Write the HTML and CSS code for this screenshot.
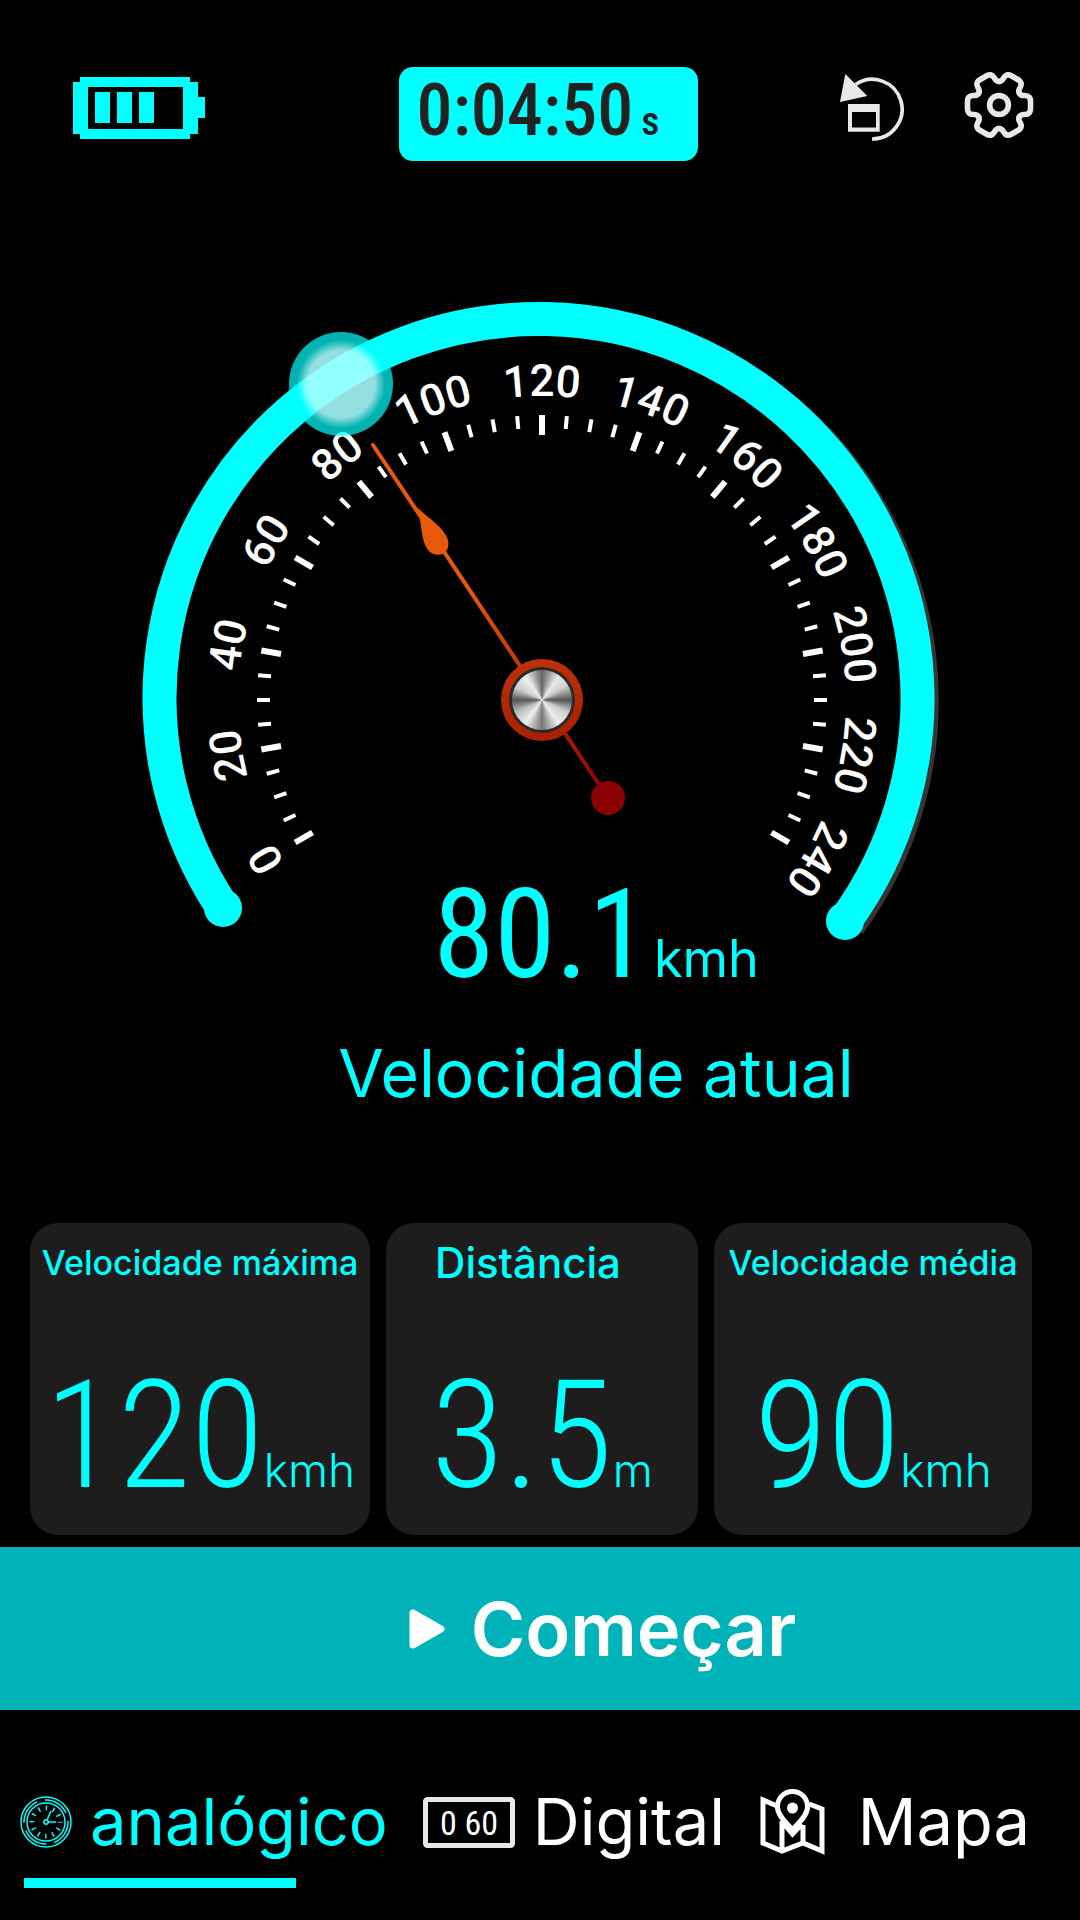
FILE: index.html
```html
<!DOCTYPE html>
<html lang="pt">

<head>
    <meta charset="UTF-8">
    <meta name="viewport" content="width=device-width, initial-scale=1.0">
    <title>Velocímetro</title>
    <link rel="stylesheet" href="styles.css">
</head>

<body>
    <header class="topbar">
        <svg class="battery" width="132" height="62" viewBox="0 0 132 62" role="img" aria-label="Bateria">
            <path fill-rule="evenodd" d="M7 0H117V5H125V20H132V41H125V57H117V62H7V57H0V5H7ZM15 10V52H110V10Z" />
            <path d="M22 15H37V46H22ZM44 15H59V46H44ZM66 15H81V46H66Z" />
        </svg>
        <div class="timer">
            <span class="timer-value">0:04:50</span>
            <span class="timer-unit">s</span>
        </div>
        <div class="actions">
            <button class="icon-btn" aria-label="Reiniciar">
                <svg width="64" height="71" viewBox="0 -3 64 71">
                    <path class="line" d="M15.6 10.5A29.8 29.8 0 1 1 32 65" stroke-width="3.7" />
                    <path class="solid" d="M5.3 0L27.3 22L0 28Z" />
                    <path class="solid" fill-rule="evenodd" d="M8 30H39.7V57.7H8ZM12 38V53.5H36V38Z" />
                </svg>
            </button>
            <button class="icon-btn" aria-label="Configurações">
                <svg width="70" height="68" viewBox="-35 -34 70 68">
                    <defs>
                        <path id="tooth" d="M20.35 -11.75C22 -9 24 -9.5 26 -9.5C30 -9.5 31.5 -7 31.5 -4V4C31.5 7 30 9.5 26 9.5C24 9.5 22 9 20.35 11.75" />
                    </defs>
                    <g class="line" stroke-width="5.6" stroke-linecap="round">
                        <use href="#tooth" />
                        <use href="#tooth" transform="rotate(60)" />
                        <use href="#tooth" transform="rotate(120)" />
                        <use href="#tooth" transform="rotate(180)" />
                        <use href="#tooth" transform="rotate(240)" />
                        <use href="#tooth" transform="rotate(300)" />
                        <circle r="9.4" />
                    </g>
                </svg>
            </button>
        </div>
    </header>

    <main>
        <svg class="gauge" viewBox="0 0 1080 710" role="img" aria-label="80.1 kmh">
            <defs>
                <radialGradient id="glow">
                    <stop offset="0.65" stop-color="#fff" stop-opacity="0.58" />
                    <stop offset="0.85" stop-color="#fff" stop-opacity="0" />
                </radialGradient>
                <linearGradient id="needle" gradientUnits="userSpaceOnUse" x1="373" y1="284" x2="608" y2="637">
                    <stop offset="0.4" stop-color="#e8590c" />
                    <stop offset="1" stop-color="#8b0000" />
                </linearGradient>
                <linearGradient id="ring" x1="0" y1="0" x2="0" y2="1">
                    <stop offset="0" stop-color="#bd3205" />
                    <stop offset="1" stop-color="#a81f04" />
                </linearGradient>
                <path id="scale-path" d="M542 843A304 304 0 0 1 542 235A304 304 0 0 1 542 843" />
            </defs>

            <path class="track-shadow" d="M786 249A379 379 0 0 1 849 763" />
            <path class="track" d="M223 747A379 379 0 1 1 845 760" />
            <circle class="track-end" cx="223" cy="747" r="19" />
            <circle class="track-end" cx="845" cy="760" r="19" />

            <g id="ticks"></g>
            <g id="labels"></g>

            <circle class="marker" cx="341" cy="223" r="52" />
            <circle cx="341" cy="223" r="52" fill="url(#glow)" />

            <path d="M373 284L608 637" stroke="url(#needle)" stroke-width="4" stroke-linecap="round" />
            <path fill="#e8590c" d="M418 347C428 357 444 366 448 379C451 393 438 397 430 391C421 383 422 365 418 347Z" />
            <circle cx="608" cy="637" r="17" fill="#8b0000" />
            <circle cx="542" cy="539" r="41" fill="url(#ring)" />
            <circle cx="542" cy="539" r="33" fill="#2a2a2a" />
            <foreignObject x="512" y="509" width="60" height="60">
                <div class="knob"></div>
            </foreignObject>
        </svg>

        <section class="readout">
            <p class="speed"><span class="speed-value">80.1</span> <span class="speed-unit">kmh</span></p>
            <h1>Velocidade atual</h1>
        </section>

        <section class="cards">
            <article class="card">
                <h2>Velocidade máxima</h2>
                <p><span class="value">120</span><span class="unit">kmh</span></p>
            </article>
            <article class="card card-distance">
                <h2>Distância</h2>
                <p><span class="value">3.5</span><span class="unit">m</span></p>
            </article>
            <article class="card">
                <h2>Velocidade média</h2>
                <p><span class="value">90</span><span class="unit">kmh</span></p>
            </article>
        </section>

        <button class="start-btn">
            <svg width="36" height="40" viewBox="0 0 36 40">
                <path d="M4 4V36L32 20Z" fill="#fff" stroke="#fff" stroke-width="7" stroke-linejoin="round" />
            </svg>
            Começar
        </button>
    </main>

    <nav class="tabs">
        <a class="tab active" href="#analogico">
            <svg width="52" height="52" viewBox="-26 -26 52 52" fill="none" stroke="#0ff">
                <circle r="25" stroke-width="1.5" />
                <circle r="22" stroke-width="1.5" stroke-dasharray="26 8" />
                <circle r="19" stroke-width="1.5" />
                <circle r="14" stroke-width="5" stroke-dasharray="1.5 5.83" stroke-dashoffset="0.75" />
                <circle r="2.2" stroke-width="1.5" />
                <path d="M2 0H10M1 -2L5 -11" stroke-width="1.6" />
            </svg>
            <span>analógico</span>
        </a>
        <a class="tab" href="#digital">
            <svg width="92" height="51" viewBox="0 0 92 51">
                <rect x="2.5" y="2.5" width="87" height="46" rx="2" fill="none" stroke="#e8e8e8" stroke-width="5" />
                <text class="tab-digits" x="46" y="38" text-anchor="middle">0 60</text>
            </svg>
            <span>Digital</span>
        </a>
        <a class="tab tab-map" href="#mapa">
            <svg width="66" height="66" viewBox="0 0 66 66" fill="none" stroke="#fff" stroke-width="5">
                <path d="M17 17L3 11V54L22 62L43 54L62 62V20L49 15" />
                <path d="M22 32V62M43 36V54M24 35L32.5 45L42 35" />
                <path d="M32.5 41C27 34 17.5 27 17.5 18C17.5 9 24 2.5 32.5 2.5S47.5 9 47.5 18C47.5 27 38 34 32.5 41Z" />
                <circle cx="32.5" cy="19" r="5.5" fill="#fff" stroke="none" />
            </svg>
            <span>Mapa</span>
        </a>
    </nav>

<script src="script.js"></script>
</body>

</html>
```
FILE: styles.css
```css
* {
    margin: 0;
    padding: 0;
    box-sizing: border-box;
}

body {
    min-height: 100vh;
    background-color: #000;
    color: #0ff;
    font-family: Inter, "Noto Sans", sans-serif;
}

button {
    border: none;
    background: none;
    font-family: inherit;
    cursor: pointer;
}

svg {
    display: block;
    flex-shrink: 0;
}

/* top bar */
.topbar {
    display: grid;
    grid-template-columns: 1fr auto 1fr;
    align-items: start;
    padding: 67px 46px 0 62px;
}

.battery {
    margin: 10px 0 0 11px;
    fill: #0ff;
}

.timer {
    display: flex;
    align-items: baseline;
    gap: 8px;
    width: 299px;
    height: 94px;
    padding-left: 18px;
    border-radius: 14px;
    background-color: #0ff;
    color: #222;
    font-family: "Roboto Condensed", "Liberation Sans Narrow", sans-serif;
    font-weight: 500;
    line-height: 88px;
}

.timer-value {
    font-size: 72px;
}

.timer-unit {
    font-size: 40px;
}

.actions {
    display: flex;
    align-items: flex-start;
    justify-content: flex-end;
    gap: 60px;
    padding-top: 4px;
}

.line {
    fill: none;
    stroke: #e8e8e8;
}

.solid {
    fill: #e8e8e8;
}

/* gauge */
.gauge {
    width: 100%;
    overflow: visible;
}

.track,
.track-shadow {
    fill: none;
    stroke: #0ff;
    stroke-width: 34;
}

.track-shadow {
    stroke: #383434;
}

.track-end {
    fill: #0ff;
}

.marker {
    fill: #0ff;
    fill-opacity: 0.7;
}

.tick {
    stroke: #fff;
    stroke-width: 4;
}

.tick.major {
    stroke-width: 6;
}

.label {
    fill: #fff;
    font-family: Roboto, sans-serif;
    font-size: 44px;
    font-weight: 500;
    text-anchor: middle;
}

.knob {
    width: 60px;
    height: 60px;
    border-radius: 50%;
    background: conic-gradient(#666, #e8e8e8 35deg, #ccc 60deg, #555 90deg, #ccc 115deg, #eee 145deg, #777 180deg, #eee 215deg, #bbb 245deg, #555 270deg, #ccc 295deg, #eee 325deg, #666);
}

/* current speed */
.readout {
    padding-left: 112px;
    text-align: center;
}

.speed {
    line-height: 128px;
}

.speed-value {
    font-family: "Roboto Condensed", "Liberation Sans Narrow", sans-serif;
    font-size: 124px;
}

.speed-unit {
    font-size: 52px;
}

.readout h1 {
    font-size: 66px;
    font-weight: 400;
    line-height: 76px;
}

/* cards */
.cards {
    display: grid;
    grid-template-columns: 340fr 312fr 318fr;
    gap: 16px;
    margin-top: 112px;
    padding: 0 48px 0 30px;
}

.card {
    display: flex;
    flex-direction: column;
    justify-content: space-between;
    height: 312px;
    padding: 20px 0 24px;
    border-radius: 28px;
    background-color: #1e1c1d;
    text-align: center;
    white-space: nowrap;
}

.card h2 {
    font-size: 34px;
    font-weight: 500;
    line-height: 40px;
}

.card-distance h2 {
    padding-right: 28px;
    font-size: 42px;
}

.value {
    font-family: "Roboto Condensed", "Liberation Sans Narrow", sans-serif;
    font-size: 150px;
    font-weight: 350;
    line-height: 150px;
}

.unit {
    font-size: 46px;
    font-weight: 300;
}

/* start */
.start-btn {
    display: flex;
    align-items: center;
    justify-content: center;
    gap: 26px;
    width: 100%;
    height: 163px;
    margin-top: 12px;
    padding-left: 125px;
    background-color: #00b3b8;
    color: #fff;
    font-size: 74px;
    font-weight: 600;
}

/* tabs */
.tabs {
    display: flex;
    justify-content: space-between;
    padding: 62px 50px 0 20px;
}

.tab {
    display: flex;
    align-items: center;
    gap: 18px;
    color: #fff;
    font-size: 65px;
    line-height: 100px;
    text-decoration: none;
}

.tab-map {
    gap: 32px;
}

.tab.active {
    position: relative;
    color: #0ff;
}

.tab.active::after {
    content: "";
    position: absolute;
    left: 4px;
    bottom: -16px;
    width: 272px;
    height: 10px;
    background-color: #0ff;
}

.tab-digits {
    fill: #fff;
    font-family: "Roboto Condensed", "Liberation Sans Narrow", sans-serif;
    font-size: 34px;
}
```
FILE: script.js
```js
const SVG = "http://www.w3.org/2000/svg";
const ticks = document.querySelector("#ticks");
const labels = document.querySelector("#labels");

// scale goes from -120deg (0) to 120deg (240), one tick every 5deg
for (let angle = -120; angle <= 120; angle += 5) {
    const major = angle % 20 === 0;
    const tick = document.createElementNS(SVG, "line");
    tick.setAttribute("class", major ? "tick major" : "tick");
    tick.setAttribute("x1", 542);
    tick.setAttribute("x2", 542);
    tick.setAttribute("y1", 254);
    tick.setAttribute("y2", major ? 274 : 267);
    tick.setAttribute("transform", `rotate(${angle} 542 539)`);
    ticks.appendChild(tick);

    if (major) {
        const text = document.createElementNS(SVG, "text");
        const path = document.createElementNS(SVG, "textPath");
        text.setAttribute("class", "label");
        path.setAttribute("href", "#scale-path");
        path.setAttribute("startOffset", `${(180 + angle) / 3.6}%`);
        path.textContent = angle + 120;
        text.appendChild(path);
        labels.appendChild(text);
    }
}
```
